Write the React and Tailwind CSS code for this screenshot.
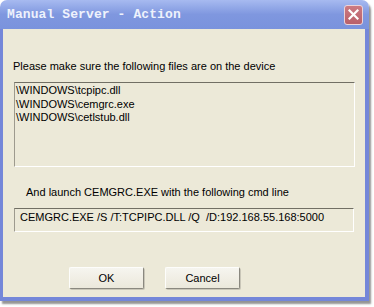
export default function App() {
  const sans = { fontFamily: '"Liberation Sans", Arial, sans-serif' };
  return (
    <div className="w-[374px] h-[307px] bg-white overflow-hidden relative">
      <div className="w-[369px] h-[301px] flex flex-col rounded-t-[7px] overflow-hidden shadow-[2px_3px_2px_rgba(60,60,60,0.55)]">
        {/* title bar */}
        <div className="h-[29px] shrink-0 flex items-center justify-between pl-[7px] pr-[6px] bg-gradient-to-b from-[#a7baf0] via-[#7f97df] to-[#7a93dd]">
          <span
            className="text-[13px] font-bold text-[#eef2fc] leading-none tracking-[0.1px]"
            style={{ fontFamily: '"Liberation Mono", "Courier New", monospace' }}
          >
            Manual Server - Action
          </span>
          <div className="w-[19px] h-[20px] rounded-[3px] border border-[#ecd3d8] bg-gradient-to-b from-[#cc7a82] to-[#b9606a] flex items-center justify-center">
            <svg width="11" height="11" viewBox="0 0 11 11">
              <path d="M1.5 1.5 L9.5 9.5 M9.5 1.5 L1.5 9.5" stroke="white" strokeWidth="2.2" strokeLinecap="square" />
            </svg>
          </div>
        </div>
        {/* client */}
        <div className="flex-1 bg-[#ece9d8] border-l-[3px] border-r-[4px] border-b-[4px] border-[#7487d9] flex flex-col pt-[31px] pl-[10px]" style={sans}>
          <div className="text-[11px] leading-[13px] text-black">
            Please make sure the following files are on the device
          </div>
          <div className="ml-[1px] mt-[9px] w-[341px] h-[85px] border-t border-l border-t-[#716f64] border-l-[#9d9a8e] border-b border-r border-b-white border-r-white pt-[1px] pl-[1px] text-[11px] leading-[13.5px] text-black">
            <div>\WINDOWS\tcpipc.dll</div>
            <div>\WINDOWS\cemgrc.exe</div>
            <div>\WINDOWS\cetlstub.dll</div>
          </div>
          <div className="ml-[13px] mt-[19px] text-[11px] leading-[13px] text-black">
            And launch CEMGRC.EXE with the following cmd line
          </div>
          <div className="ml-[1px] mt-[9px] w-[340px] h-[24px] border-t border-l border-t-[#716f64] border-l-[#9d9a8e] border-b border-r border-b-white border-r-white pt-[2px] pl-[5px] text-[11px] leading-[13px] text-black whitespace-pre">
            {"CEMGRC.EXE /S /T:TCPIPC.DLL /Q  /D:192.168.55.168:5000"}
          </div>
          <div className="mt-[35px] ml-[56px] flex gap-[21px]">
            <button className="w-[75px] h-[22px] rounded-[2px] border border-t-[#fdfdfb] border-l-[#fdfdfb] border-r-[#8a887f] border-b-[#8a887f] bg-gradient-to-b from-[#f6f5ef] to-[#ebe8db] text-[11px] text-black shadow-[1px_1px_0_#c9c6b8]">
              OK
            </button>
            <button className="w-[75px] h-[22px] rounded-[2px] border border-t-[#fdfdfb] border-l-[#fdfdfb] border-r-[#8a887f] border-b-[#8a887f] bg-gradient-to-b from-[#f6f5ef] to-[#ebe8db] text-[11px] text-black shadow-[1px_1px_0_#c9c6b8]">
              Cancel
            </button>
          </div>
        </div>
      </div>
    </div>
  );
}
